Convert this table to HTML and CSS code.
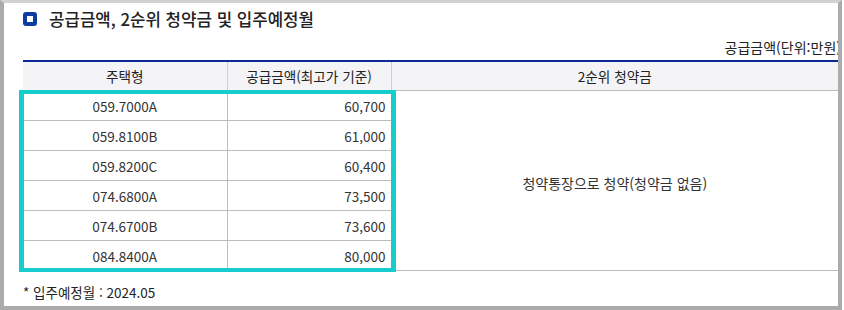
FILE: index.html
```html
<!DOCTYPE html>
<html lang="ko">
<head>
<meta charset="utf-8">
<title>공급금액, 2순위 청약금 및 입주예정월</title>
<link rel="stylesheet" href="styles.css">
</head>
<body>
<div class="frame">
  <h2 class="title">
    <span class="title-icon" aria-hidden="true"></span>
    <span class="title-text">공급금액, 2순위 청약금 및 입주예정월</span>
  </h2>
  <div class="unit">공급금액(단위:만원)</div>
  <div class="table-wrap">
    <table class="supply">
      <colgroup>
        <col class="c1">
        <col class="c2">
        <col class="c3">
      </colgroup>
      <thead>
        <tr>
          <th>주택형</th>
          <th>공급금액(최고가 기준)</th>
          <th>2순위 청약금</th>
        </tr>
      </thead>
      <tbody>
        <tr><td class="type">059.7000A</td><td class="amt">60,700</td><td class="merged" rowspan="6">청약통장으로 청약(청약금 없음)</td></tr>
        <tr><td class="type">059.8100B</td><td class="amt">61,000</td></tr>
        <tr><td class="type">059.8200C</td><td class="amt">60,400</td></tr>
        <tr><td class="type">074.6800A</td><td class="amt">73,500</td></tr>
        <tr><td class="type">074.6700B</td><td class="amt">73,600</td></tr>
        <tr><td class="type">084.8400A</td><td class="amt">80,000</td></tr>
      </tbody>
    </table>
    <div class="highlight" aria-hidden="true"></div>
  </div>
  <p class="note">* 입주예정월 : 2024.05</p>
</div>
</body>
</html>
```
FILE: styles.css
```css
html, body {
  margin: 0;
  padding: 0;
  background: #ffffff;
}

body {
  font-family: "Noto Sans CJK KR", "Noto Sans", sans-serif;
  color: #333333;
}

.frame {
  width: 842px;
  height: 310px;
  box-sizing: border-box;
  border-top: 3px solid #d2d2d2;
  border-left: 4px solid #ababab;
  border-right: 4px solid #ababab;
  border-bottom: 4px solid #ababab;
  padding: 4px 0 0 19px;
  overflow: hidden;
}

.title {
  display: flex;
  align-items: center;
  gap: 12px;
  margin: 0;
  height: 24px;
  font-size: 16.8px;
  line-height: 24px;
  font-weight: 500;
  color: #222222;
}

.title-icon {
  width: 14px;
  height: 14px;
  box-sizing: border-box;
  border: 4px solid #0d3da3;
  border-radius: 3px;
  background: #ffffff;
  flex: none;
}

.unit {
  margin-top: 7px;
  margin-right: -3px;
  text-align: right;
  font-size: 14px;
  line-height: 18px;
  color: #222222;
}

.table-wrap {
  position: relative;
  margin-top: 4px;
}

.supply {
  width: 815px;
  border-collapse: collapse;
  table-layout: fixed;
  font-size: 14px;
  border-top: 2px solid #0b2a98;
}

.c1 { width: 204px; }
.c2 { width: 164px; }
.c3 { width: 447px; }

.supply th {
  height: 28px;
  padding: 0;
  background: #f4f4f6;
  font-weight: 400;
  font-size: 13.6px;
  color: #222222;
  border-bottom: 1px solid #bdbdbd;
  border-left: 1px solid #d0d0d0;
  line-height: 18px;
}

.supply th:first-child {
  border-left: none;
}

.supply td {
  height: 29px;
  padding: 0;
  line-height: 18px;
  border-bottom: 1px solid #bdbdbd;
  border-left: 1px solid #bdbdbd;
  color: #333333;
}

.supply td.type {
  border-left: none;
  text-align: center;
  font-size: 13.5px;
}

.supply td.amt {
  text-align: right;
  padding-right: 5px;
  font-size: 13.5px;
}

.supply td.merged {
  text-align: center;
  vertical-align: middle;
  padding-top: 4px;
}

.highlight {
  position: absolute;
  left: -4px;
  top: 30px;
  width: 377px;
  height: 182px;
  box-sizing: border-box;
  border-style: solid;
  border-color: #17cccc;
  border-width: 4px 5px;
}

.note {
  margin: 12px 0 0 0;
  font-size: 13.5px;
  line-height: 18px;
  color: #222222;
}
```
